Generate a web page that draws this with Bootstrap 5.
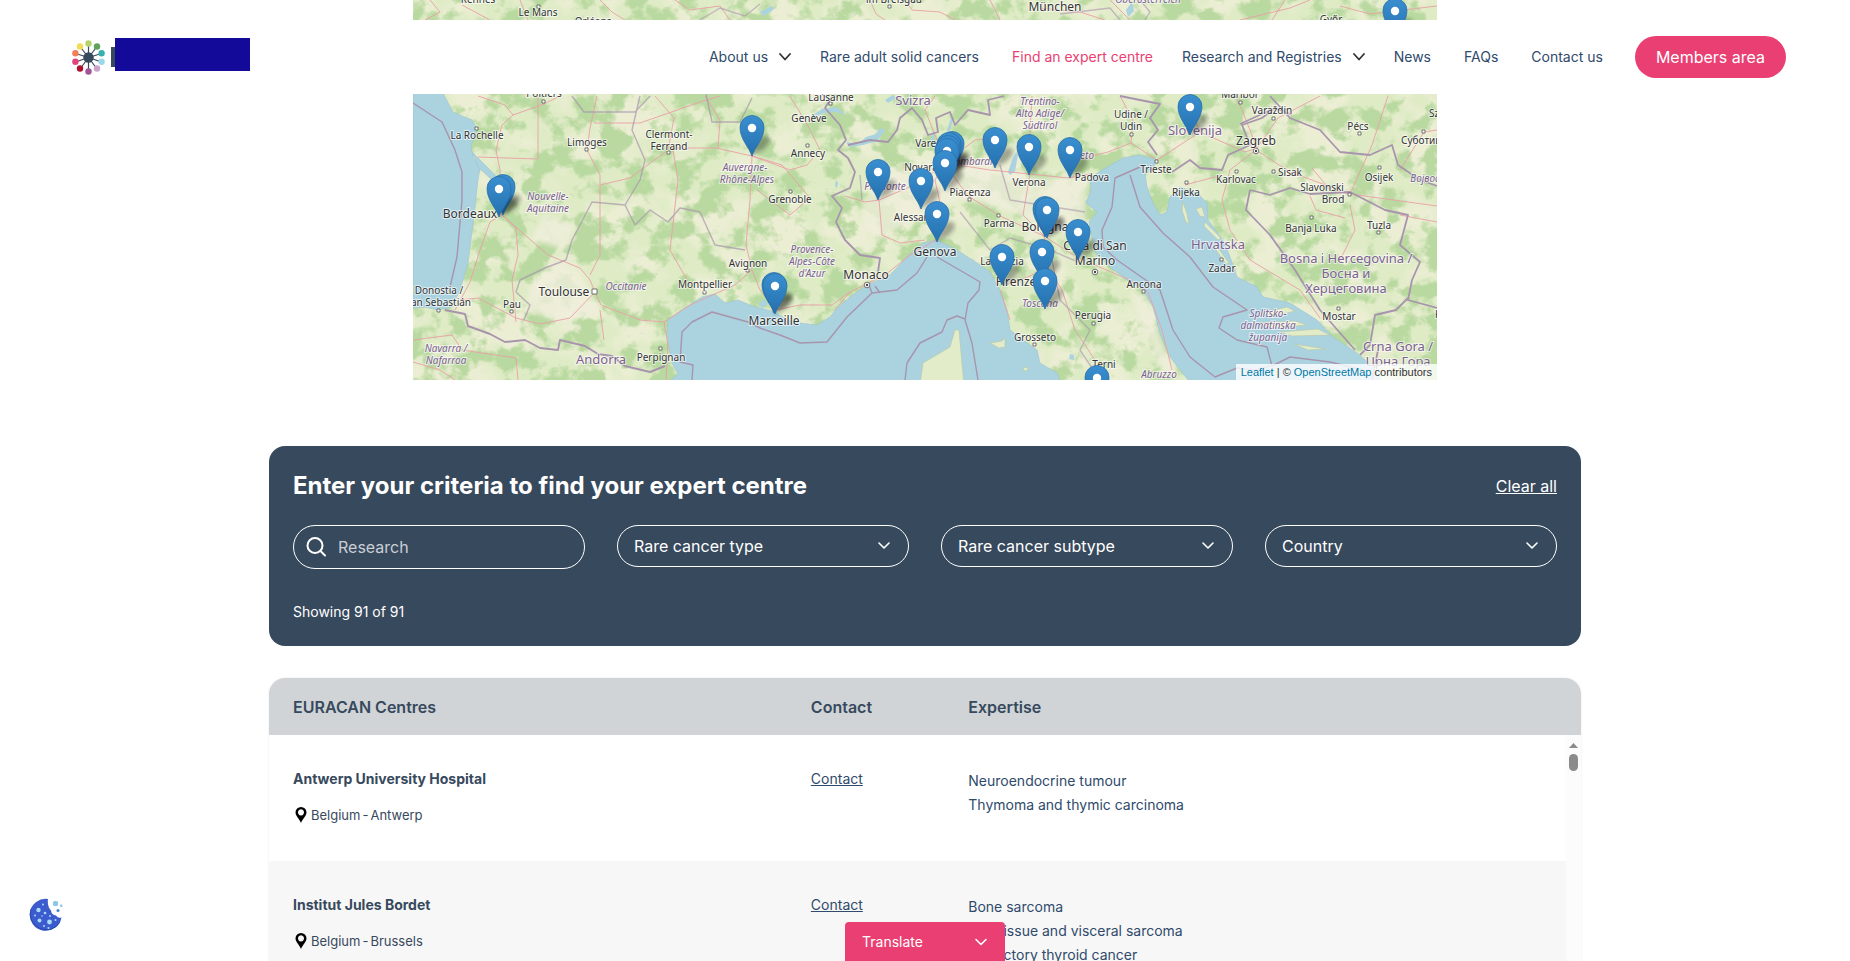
<!DOCTYPE html>
<html lang="en">
<head>
<meta charset="utf-8">
<meta name="viewport" content="width=device-width, initial-scale=1">
<title>Find an expert centre</title>
<link href="https://cdn.jsdelivr.net/npm/bootstrap@5.3.0/dist/css/bootstrap.min.css" rel="stylesheet">
<style>
  :root { --navy: #37495d; --ink: #2f4a6b; --pink: #e93f72; }
  body { font-family: Inter, "Liberation Sans", sans-serif; color: var(--navy); font-size: 14px; }
  a { color: var(--ink); }

  .site-header { top: 20px; min-height: 74px; padding: 0 64px 0 72px; }
  .site-nav { gap: 25px; font-size: 14px; }
  .site-nav .nav-link { color: var(--ink); padding: 0 4px; line-height: 24px; }
  .site-nav .menu-link { padding: 0; display: flex; align-items: center; gap: 11px; background: none; border: 0; }
  .site-nav .nav-link.active { color: var(--pink); }
  .btn-pink { background: var(--pink); color: #fff; font-size: 16px; line-height: 24px; padding: 9px 21px; border: 0; }
  .btn-pink:hover { background: #d12f60; color: #fff; }
  .brand-bar { width: 4px; height: 20px; background: var(--navy); margin-left: 6px; }
  .brand-name { width: 135px; height: 33px; background: #130a99; margin-bottom: 5px; }

  .map-wrap { max-width: 1024px; }
  .map-wrap svg { font-family: "Noto Sans", "Liberation Sans", sans-serif; }
  .map-credit { font: 11px/16px "Liberation Sans", sans-serif; color: #333; background: rgba(255,255,255,.8); padding: 0 5px; }
  .map-credit a { color: #0078a8; text-decoration: none; }

  .wide { max-width: 1312px; }
  .filter-card { background: var(--navy); border-radius: 16px; margin-top: 66px; padding: 24px 24px 22px; }
  .filter-title { font-size: 24px; line-height: 32px; font-weight: 700; }
  .filter-row { --bs-gutter-x: 32px; margin-top: 23px; }
  .pill, .pill:focus { background-color: transparent; color: #fff; border: 1px solid #fff; border-radius: 22px; font-size: 16px; line-height: 24px; padding: 8px 16px; }
  .pill option { color: #222; }
  select.pill { background-image: url("data:image/svg+xml,%3Csvg xmlns='http://www.w3.org/2000/svg' width='12' height='8' fill='none' stroke='white' stroke-width='1.6' stroke-linecap='round' stroke-linejoin='round'%3E%3Cpath d='M1 1l5 5 5-5'/%3E%3C/svg%3E"); background-size: 12px 8px; background-position: right 18px center; }
  input.pill { padding: 9px 16px 9px 44px; }
  input.pill::placeholder { color: #c9cfd5; opacity: 1; }
  .search-icon { left: 13px; top: 11px; }
  .count-line { line-height: 24px; margin-top: 31px; }

  .centres { margin-top: 32px; border-radius: 16px 16px 0 0; box-shadow: 0 0 2px #e4e4e4; overflow: hidden; }
  .centres table { table-layout: fixed; line-height: 24px; }
  .centres th { font-size: 16px; font-weight: 600; background: #d0d4d7; height: 57px; vertical-align: middle; padding: 0; }
  .centres td { height: 126px; vertical-align: top; padding: 32px 0; color: var(--ink); }
  .centres td:last-child { padding-top: 34px; }
  .centres th:first-child, .centres td:first-child { width: 41.3%; padding-left: 24px; }
  .centres th:nth-child(2) { width: 12%; }
  .centres tbody tr:nth-child(even) td { background: #f7f7f7; }
  .centre-name { font-size: 14px; line-height: 24px; font-weight: 700; color: var(--navy); margin: 0; }
  .centre-place { font-size: 13px; line-height: 20px; margin: 14px 0 0; gap: 2px; color: var(--navy); }
  .rail { top: 57px; right: 0; bottom: 0; width: 15px; background: #fcfcfc; }
  .rail span { width: 9px; height: 17px; border-radius: 5px; background: #8b8b8b; margin-top: 6px; }

  .translate { width: 160px; height: 39px; background: var(--pink); border-radius: 4px 4px 0 0; padding: 0 18px 0 17px; }
  .cookie { left: 29px; bottom: 29px; }
</style>
</head>
<body>

<header class="site-header fixed-top bg-white d-flex align-items-center justify-content-between">
  <a href="#" class="d-flex align-items-center text-decoration-none" aria-label="Home">
    <svg width="33" height="35" viewBox="0 0 33 35">
      <g stroke="#37495d" stroke-width="1.2">
        <path d="M16.500 17.500V4M16.500 17.500V31M16.500 17.500L8 6.500M16.500 17.500L25 6.500M16.500 17.500L3.500 13.500M16.500 17.500L29.500 13.500M16.500 17.500L3.500 22M16.500 17.500L29.500 22M16.500 17.500L8 29M16.500 17.500L25 29"/>
      </g>
      <circle cx="16.500" cy="17.500" r="5.200" fill="#37495d"/>
      <circle cx="16.500" cy="3.500" r="3.200" fill="#b5d26b"/><circle cx="25" cy="6.500" r="3.200" fill="#5fa35a"/>
      <circle cx="29.600" cy="13.300" r="3.200" fill="#38b0b0"/><circle cx="29.600" cy="21.800" r="3.200" fill="#9dd8ea"/>
      <circle cx="25" cy="28.500" r="3.200" fill="#c9a4cf"/><circle cx="16.500" cy="31.500" r="3.200" fill="#a0559b"/>
      <circle cx="8" cy="28.500" r="3.200" fill="#b01030"/><circle cx="3.400" cy="21.800" r="3.200" fill="#e0457a"/>
      <circle cx="3.400" cy="13.300" r="3.200" fill="#f0805a"/><circle cx="8" cy="6.500" r="3.200" fill="#f3dc55"/>
    </svg>
    <span class="brand-bar"></span><span class="brand-name"></span>
  </a>
  <nav class="d-flex align-items-center" aria-label="Main">
    <ul class="site-nav nav flex-nowrap align-items-center me-4 pe-1">
      <li><button class="nav-link menu-link" type="button">About us <svg width="12" height="8" fill="none" stroke="#333" stroke-width="1.800" stroke-linecap="round" stroke-linejoin="round"><path d="M1 1l5 5.500L11 1"/></svg></button></li>
      <li><a class="nav-link" href="#">Rare adult solid cancers</a></li>
      <li><a class="nav-link active" href="#">Find an expert centre</a></li>
      <li><button class="nav-link menu-link" type="button">Research and Registries <svg width="12" height="8" fill="none" stroke="#333" stroke-width="1.800" stroke-linecap="round" stroke-linejoin="round"><path d="M1 1l5 5.500L11 1"/></svg></button></li>
      <li><a class="nav-link" href="#">News</a></li>
      <li><a class="nav-link" href="#">FAQs</a></li>
      <li><a class="nav-link" href="#">Contact us</a></li>
    </ul>
    <a class="btn btn-pink rounded-pill" href="#">Members area</a>
  </nav>
</header>

<main>
  <div class="map-wrap mx-auto position-relative">
    <svg class="d-block w-100" viewBox="413 0 1024 380" role="img" aria-label="Map of expert centres">
      <defs>
        <filter id="woods" x="0" y="0" width="100%" height="100%" color-interpolation-filters="sRGB">
          <feTurbulence type="fractalNoise" baseFrequency="0.04 0.046" numOctaves="5" seed="8"/>
          <feColorMatrix values="0 0 0 0 .70  0 0 0 0 .84  0 0 0 0 .60  0 7 0 0 -3.300"/>
        </filter>
        <filter id="plains" x="0" y="0" width="100%" height="100%" color-interpolation-filters="sRGB">
          <feTurbulence type="fractalNoise" baseFrequency="0.02" numOctaves="4" seed="31"/>
          <feColorMatrix values="0 0 0 0 .95  0 0 0 0 .94  0 0 0 0 .86  0 5 0 0 -2.200"/>
        </filter>
        <filter id="soft"><feGaussianBlur stdDeviation="2"/></filter>
        <linearGradient id="pinFill" x1="0" y1="0" x2="0" y2="1"><stop offset="0" stop-color="#3a8fd0"/><stop offset="1" stop-color="#2470ae"/></linearGradient>
        <g id="pin">
          <path d="M-1 0L5-15Q11-23 17-19Q20-14 11-6Z" fill="#000" opacity=".3" filter="url(#soft)"/>
          <path d="M0 0C-3-9-12-17-12-28.500A12 12 0 0 1 12-28.500C12-17 3-9 0 0Z" fill="url(#pinFill)" stroke="#2b6fa8" stroke-width=".8"/>
          <circle cy="-28" r="4.200" fill="#fff"/>
        </g>
      </defs>
      <rect x="413" y="0" width="1024" height="380" fill="#deebc5"/>
      <rect x="413" y="0" width="1024" height="380" filter="url(#plains)" opacity=".7"/>
      <rect x="413" y="0" width="1024" height="380" filter="url(#woods)" opacity=".85"/>
      <!-- plains of the Po valley and the Garonne -->
      <g fill="#f1efdd" opacity=".75" filter="url(#soft)">
        <path d="M862 200L890 172L935 160L985 168L1040 178L1088 176L1085 215L1092 240L1050 228L1000 208L960 200L925 212L880 240L862 225Z"/>
        <path d="M530 285L560 265L590 290L600 312L560 322L525 310ZM545 215L575 225L565 250L530 240Z"/>
        <path d="M1130 292L1145 296L1165 350L1180 378L1162 370L1140 320Z"/>
      </g>
      <!-- sea -->
      <g fill="#aad3df" stroke="#9cc3d4" stroke-width=".6">
        <path d="M413 70L438 82L445 97L453 112L462 116L472 120L477 129L471 146L473 158L480 168L478 180L473 223L468 263L460 290L452 307L438 310L425 307L413 308Z"/>
        <path d="M472 152L494 174L504 190L501 194L490 178L478 167Z"/>
        <path d="M665 385L678 374L672 363L667 337L668 320L682 310L702 297L715 294L725 303L738 300L755 307L764 309L775 312L787 320L800 323L817 325L830 317L837 308L850 297L867 285L890 275L907 257L923 243L937 240L957 250L977 263L990 272L1000 290L1007 310L1010 330L1023 340L1037 350L1040 363L1057 373L1062 385Z"/>
        <path d="M1090 178L1107 167L1123 158L1140 155L1157 160L1153 168L1145 173L1147 187L1153 203L1160 215L1167 212L1170 197L1180 187L1197 193L1207 203L1208 220L1223 240L1230 257L1237 277L1257 287L1263 297L1290 303L1317 320L1333 337L1357 353L1373 367L1384 385L1192 385L1170 357L1160 333L1153 307L1143 290L1127 280L1110 267L1096 254L1092 238L1089 222L1097 212L1086 203L1091 190Z"/>
      </g>
      <!-- islands -->
      <g fill="#e3ecc8" stroke="#b7c6a4" stroke-width=".6">
        <path d="M920 385L923 363L940 353L950 347L955 330L959 330L961 353L964 385Z"/>
        <path d="M990 343l12-2 3-3v9l-6 1zM1023 368l4-1 1 3-4 1zM1183 202l4 12 2 10-3-2-4-12zM1196 209l6-2 3 10-5-1zM1205 222l16 16-3 2-14-14zM1263 313l24-6 8 4-20 5zM1258 323l37-2 12 4-35 3zM1280 332l38-3 12 6-38 1zM1294 344l32 5-18 1zM1215 244l14 19-3 1-12-17z"/>
      </g>
      <!-- lakes -->
      <g fill="#aad3df">
        <path d="M812 116l10-7 14-2 10 8-10-3-12 1-11 5zM846 142l12 2 8-7 10-3 4-6 5 2-8 11-14 4-14 2zM1008 172l4-12 4-8 2 3-3 16-5 4zM930 145l3-14 2 1-2 14zM947 131l4-13 2 1-3 12zM885 100l8-5 3 3-8 5zM758 304l6-5 4 5-6 4zM1070 354l4 1v5l-5-1zM836 180l2 3-1 5-2-2zM760 12l12-6 2 3-10 7zM1126 10l6-8 2 9-6 6z"/>
      </g>
      <!-- roads -->
      <g fill="none" stroke="#ea9fa6" stroke-width=".9">
        <path d="M502 215L500 170L496 150L502 125L513 115L505 105L478 96M513 115L544 104L560 96M538 159V96M537 159L478 157M502 215L516 228L518 255L512 280L516 322M502 215L548 255L580 268L590 280L595 292M502 215L490 222L480 250L470 282L455 310M595 292L601 305L640 320L664 322L690 305L708 297L735 285L752 270L746 245L750 200L752 156L748 130M597 96L590 128L587 150L600 175V255L590 275M600 185L630 178L668 150L674 118L655 96M673 150L678 180L670 250L690 285M673 148L716 148L752 156L790 170L807 165L820 150L808 126L790 96M595 292L570 318L540 324L516 318L478 298L460 300M600 310L604 340M664 322L668 345L666 380M413 340L452 335L462 350L516 358L518 380M413 362L440 370L455 380M705 96L720 120L718 148M594 123H640L700 102L720 96"/>
        <path d="M752 156L782 165L810 198L790 215L757 190M776 310L760 290L752 270M776 310L800 305L832 305L850 292L885 275L910 255L936 240L942 212L935 180L945 163L990 170L1030 174L1068 178L1090 174M879 200L882 235L900 243L925 240M879 200L921 182L945 163M879 200L865 202L845 196M944 163L968 196L1000 216L1044 236L1078 258L1130 280L1148 292L1162 330L1172 370M1030 174L1023 215L1044 236M1029 147L1032 96M1044 236L1048 268L1062 290L1075 330L1095 360M1000 268L1005 285L1030 276L1048 268M1000 290L1010 320M937 140L925 110L935 96M945 163L975 140L995 138M850 292L835 310"/>
        <path d="M1075 160L1108 152L1131 143L1133 120L1120 96M1131 143L1157 160L1180 145L1200 132L1245 152L1257 148L1242 110L1235 96M1256 150L1290 172L1350 194L1437 206M1256 150L1230 170L1222 200L1230 230L1250 260L1300 290L1320 318M1185 185L1222 175M1257 148L1278 118L1320 96M1350 194L1372 145L1388 96M1350 194L1330 190L1312 168M1200 132L1185 96M1310 196L1316 210L1345 218M1437 130L1424 132L1400 170M1350 205L1355 230L1340 260M1437 222L1400 215"/>
        <path d="M430 0L440 12L425 20M462 5L490 20M520 0L528 20M600 0L612 12L625 20M675 0L690 10L720 6L730 20M870 0L876 14L885 20M905 0L912 10L940 12L955 20M990 0L1000 20M1040 8L1080 12L1105 20M1110 0L1130 20M1240 20L1290 8L1310 0M1272 20L1285 0M1340 6L1370 14L1437 6"/>
      </g>
      <!-- national and regional borders -->
      <g fill="none" stroke="#a894ad" stroke-width="1.400" stroke-linejoin="round">
        <path stroke-width="1.900" d="M445 310L465 314L468 326L490 334L505 342L525 340L540 348L558 350L560 340L585 346L598 354L612 356L625 366L650 372L665 366"/>
        <path stroke-width="1.800" d="M878 272L880 258L860 255L845 240L836 222L842 208L832 196L850 188L855 172L848 158L838 150L846 140L840 125L825 108L830 100L822 94M848 145L870 140L888 142L897 130L900 118L912 108L922 120L928 135L938 132L936 118L950 112L955 125L968 110L990 115L988 100L1004 96"/>
        <path stroke-width="1.800" d="M1120 96L1160 104L1150 118L1158 130L1148 142L1157 155M1172 172L1190 160L1200 168L1222 170L1228 155L1250 145L1242 125L1262 118L1275 108M1270 96L1290 118L1320 130L1340 152L1370 155L1392 145L1398 165L1420 180L1437 186M1292 115L1275 108L1240 124"/>
        <path stroke-width="1.800" d="M1250 190L1246 210L1270 235L1295 270L1320 310L1355 350M1250 190L1270 195L1290 188L1310 194L1350 192L1385 210L1408 215L1400 245L1420 262L1412 280L1408 300L1437 308M1408 298L1396 310L1375 315L1370 345L1360 355M1372 380L1378 350"/>
        <path d="M413 103L442 122L455 150L462 172V200L457 257L450 287M692 380L693 365L680 362L682 332L692 322L712 312L748 322L760 328L780 335L800 343L827 342L847 317L872 293L897 290L917 273L927 257M872 293L869 285M880 293L875 286M937 257L963 272L980 282L979 290L968 303L965 320L972 343L978 380M905 380L907 363L920 343L942 332L947 320L957 316L965 319"/>
        <path d="M1140 167L1115 178L1112 207L1102 230L1103 247L1117 260L1160 290L1173 330L1190 357L1215 377L1237 368L1255 370L1270 366M1130 175L1140 207L1163 233L1190 257L1213 287L1247 310L1223 317L1219 328L1237 340L1267 347L1272 366L1290 357L1330 362L1363 370"/>
        <path opacity=".7" d="M516 292L520 280L545 268L566 260L572 240L580 225L592 202L625 205L635 225L650 210L668 222L680 208L700 212L715 245L745 250M572 96L584 112L635 112L650 96M706 94L712 122L740 122L752 98M625 205L640 180L645 160L632 130L640 96M516 292L530 305L524 320"/>
        <path opacity=".6" d="M860 175L862 200M960 212L990 250L1010 238L1050 250L1078 262M1050 250L1060 300L1090 330L1080 350L1100 380M1000 165L1010 200L1085 212M700 20L720 8L745 16L760 4M1140 0L1150 12L1145 20M1120 20L1110 8L1060 14"/>
      </g>
      <!-- towns -->
      <g fill="#fff" stroke="#555" stroke-width=".8">
        <path d="M475 127h3v3h-3zM585 148h3v3h-3zM667 151h3v3h-3zM542 100h3v3h-3zM510 310h3v3h-3zM659 347h3v3h-3zM703 291h3v3h-3zM746 269h3v3h-3zM437 309h3v3h-3zM806 144h3v3h-3zM789 190h3v3h-3zM829 102h3v3h-3zM968 198h3v3h-3zM997 214h3v3h-3zM1033 343h3v3h-3zM1092 322h3v3h-3zM1142 290h3v3h-3zM1130 133h3v3h-3zM1155 160h3v3h-3zM1185 181h3v3h-3zM1235 170h3v3h-3zM1272 170h3v3h-3zM1272 117h3v3h-3zM1358 132h3v3h-3zM1378 166h3v3h-3zM1310 216h3v3h-3zM1377 231h3v3h-3zM1220 258h3v3h-3zM1337 307h3v3h-3zM1422 130h3v3h-3zM1348 193h3v3h-3zM537 5h3v3h-3zM888 5h3v3h-3zM1239 101h3v3h-3zM592 289h5v5h-5z"/>
        <circle cx="867" cy="285" r="2.800"/><circle cx="1095" cy="272" r="2.800"/><circle cx="1256" cy="151" r="2.800"/>
      </g>
      <g fill="#444"><circle cx="867" cy="285" r="1.200"/><circle cx="1095" cy="272" r="1.200"/><circle cx="1256" cy="151" r="1.200"/></g>
      <!-- place names -->
      <g fill="#333" font-size="10" text-anchor="middle" stroke="#fff" stroke-opacity=".65" stroke-width="2" paint-order="stroke" stroke-linejoin="round">
        <text x="478" y="3">Rennes</text><text x="538" y="16">Le Mans</text><text x="593" y="25">Orléans</text><text x="894" y="3">im Breisgau</text><text x="1331" y="23">Győr</text>
        <text x="544" y="97">Poitiers</text><text x="477" y="139">La Rochelle</text><text x="587" y="146">Limoges</text>
        <text x="669" y="138">Clermont-<tspan x="669" dy="12">Ferrand</tspan></text>
        <text x="439" y="294">Donostia /</text><text x="441" y="306">an Sebastián</text><text x="512" y="308">Pau</text><text x="705" y="288">Montpellier</text><text x="748" y="267">Avignon</text><text x="661" y="361">Perpignan</text>
        <text x="831" y="101">Lausanne</text><text x="809" y="122">Genève</text><text x="808" y="157">Annecy</text><text x="790" y="203">Grenoble</text><text x="931" y="147">Varese</text><text x="921" y="171">Novara</text><text x="970" y="196">Piacenza</text><text x="921" y="221">Alessandria</text><text x="999" y="227">Parma</text><text x="1029" y="186">Verona</text><text x="1092" y="181">Padova</text><text x="1002" y="265">La Spezia</text><text x="1093" y="319">Perugia</text><text x="1035" y="341">Grosseto</text><text x="1104" y="368">Terni</text>
        <text x="1240" y="98">Maribor</text><text x="1131" y="118">Udine /<tspan x="1131" dy="12">Udin</tspan></text><text x="1272" y="114">Varaždin</text><text x="1358" y="130">Pécs</text><text x="1434" y="117">Sz</text><text x="1424" y="144">Суботица</text><text x="1156" y="173">Trieste</text><text x="1186" y="196">Rijeka</text><text x="1236" y="183">Karlovac</text><text x="1290" y="176">Sisak</text><text x="1379" y="181">Osijek</text><text x="1322" y="191">Slavonski<tspan x="1333" dy="12">Brod</tspan></text><text x="1311" y="232">Banja Luka</text><text x="1379" y="229">Tuzla</text><text x="1222" y="272">Zadar</text><text x="1144" y="288">Ancona</text><text x="1339" y="320">Mostar</text><text x="1438" y="318">K</text>
        <g font-size="12"><text x="1055" y="11">München</text><text x="470" y="218">Bordeaux</text><text x="564" y="296">Toulouse</text><text x="774" y="325">Marseille</text><text x="866" y="279">Monaco</text><text x="935" y="256">Genova</text><text x="1045" y="231">Bologna</text><text x="1095" y="250">Città di San<tspan x="1095" dy="15">Marino</tspan></text><text x="1016" y="286">Firenze</text><text x="1256" y="145">Zagreb</text></g>
      </g>
      <g fill="#7d6190" font-size="10" font-style="italic" text-anchor="middle" stroke="#fff" stroke-opacity=".6" stroke-width="2" paint-order="stroke">
        <text x="548" y="200">Nouvelle-<tspan x="548" dy="12">Aquitaine</tspan></text><text x="745" y="171">Auvergne-<tspan x="747" dy="12">Rhône-Alpes</tspan></text><text x="626" y="290">Occitanie</text><text x="446" y="352">Navarra /<tspan x="446" dy="12">Nafarroa</tspan></text>
        <text x="812" y="253">Provence-<tspan x="812" dy="12">Alpes-Côte</tspan><tspan x="812" dy="12">d'Azur</tspan></text><text x="885" y="190">Piemonte</text><text x="974" y="165">Lombardia</text><text x="1040" y="105">Trentino-<tspan x="1040" dy="12">Alto Adige/</tspan><tspan x="1040" dy="12">Südtirol</tspan></text><text x="1079" y="159">Veneto</text><text x="1040" y="307">Toscana</text><text x="1159" y="378">Abruzzo</text><text x="1268" y="317">Splitsko-<tspan x="1268" dy="12">dalmatinska</tspan><tspan x="1268" dy="12">županija</tspan></text><text x="1434" y="182">Војводина</text><text x="1148" y="3">Oberösterreich</text>
      </g>
      <g fill="#7d6190" font-size="13" text-anchor="middle" stroke="#fff" stroke-opacity=".6" stroke-width="2" paint-order="stroke">
        <text x="913" y="105">Svizra</text><text x="601" y="364">Andorra</text><text x="1195" y="135">Slovenija</text><text x="1218" y="249">Hrvatska</text><text x="1346" y="263">Bosna i Hercegovina /<tspan x="1346" dy="15">Босна и</tspan><tspan x="1346" dy="15">Херцеговина</tspan></text><text x="1398" y="351">Crna Gora /<tspan x="1398" dy="15">Црна Гора</tspan></text>
      </g>
      <!-- pins: each one's tip is its place on the map -->
      <use href="#pin" x="1395" y="39"/><use href="#pin" x="1190" y="135"/><use href="#pin" x="752" y="156"/>
      <use href="#pin" x="995" y="168"/><use href="#pin" x="952" y="172"/><use href="#pin" x="949" y="173"/><use href="#pin" x="948" y="176"/><use href="#pin" x="947" y="179"/>
      <use href="#pin" x="1029" y="175"/><use href="#pin" x="1070" y="178"/><use href="#pin" x="945" y="191"/><use href="#pin" x="878" y="200"/>
      <use href="#pin" x="921" y="209"/><use href="#pin" x="503" y="215"/><use href="#pin" x="499" y="217"/><use href="#pin" x="1045" y="237"/><use href="#pin" x="1047" y="238"/>
      <use href="#pin" x="937" y="242"/><use href="#pin" x="1078" y="260"/><use href="#pin" x="1042" y="280"/><use href="#pin" x="1002" y="285"/>
      <use href="#pin" x="1045" y="309"/><use href="#pin" x="774" y="313"/><use href="#pin" x="775" y="314"/><use href="#pin" x="1097" y="406"/>
    </svg>
    <div class="map-credit position-absolute bottom-0 end-0"><a href="#">Leaflet</a> | © <a href="#">OpenStreetMap</a> contributors</div>
  </div>

  <section class="filter-card wide mx-auto text-white">
    <div class="d-flex align-items-center justify-content-between">
      <h2 class="filter-title m-0">Enter your criteria to find your expert centre</h2>
      <a href="#" class="text-white fs-6">Clear all</a>
    </div>
    <form class="row filter-row">
      <div class="col-3">
        <div class="position-relative">
          <svg class="search-icon position-absolute" width="20" height="21" fill="none" stroke="#fff" stroke-width="2" stroke-linecap="round"><circle cx="9" cy="9.500" r="7.500"/><path d="M14.500 15l4.500 4.500"/></svg>
          <input class="form-control pill" type="text" placeholder="Research" aria-label="Research">
        </div>
      </div>
      <div class="col-3"><select class="form-select pill" aria-label="Rare cancer type"><option>Rare cancer type</option></select></div>
      <div class="col-3"><select class="form-select pill" aria-label="Rare cancer subtype"><option>Rare cancer subtype</option></select></div>
      <div class="col-3"><select class="form-select pill" aria-label="Country"><option>Country</option></select></div>
    </form>
    <p class="count-line mb-0">Showing 91 of 91</p>
  </section>

  <section class="centres wide mx-auto position-relative">
    <table class="w-100">
      <thead><tr><th>EURACAN Centres</th><th>Contact</th><th>Expertise</th></tr></thead>
      <tbody>
        <tr>
          <td><h3 class="centre-name">Antwerp University Hospital</h3>
            <p class="centre-place d-flex align-items-center"><svg width="16" height="16" viewBox="0 0 16 16"><path fill="#000" fill-rule="evenodd" d="M8 0a5.500 5.500 0 0 1 5.500 5.500C13.500 9 9.500 12 8 16C6.500 12 2.500 9 2.500 5.500A5.500 5.500 0 0 1 8 0zM8 2.200a3 3.200 0 1 0 .01 0z"/></svg><span>Belgium</span><span>-</span><span>Antwerp</span></p></td>
          <td><a href="#">Contact</a></td>
          <td>Neuroendocrine tumour<br>Thymoma and thymic carcinoma</td>
        </tr>
        <tr>
          <td><h3 class="centre-name">Institut Jules Bordet</h3>
            <p class="centre-place d-flex align-items-center"><svg width="16" height="16" viewBox="0 0 16 16"><path fill="#000" fill-rule="evenodd" d="M8 0a5.500 5.500 0 0 1 5.500 5.500C13.500 9 9.500 12 8 16C6.500 12 2.500 9 2.500 5.500A5.500 5.500 0 0 1 8 0zM8 2.200a3 3.200 0 1 0 .01 0z"/></svg><span>Belgium</span><span>-</span><span>Brussels</span></p></td>
          <td><a href="#">Contact</a></td>
          <td>Bone sarcoma<br>Soft tissue and visceral sarcoma<br>Refractory thyroid cancer</td>
        </tr>
      </tbody>
    </table>
    <div class="rail position-absolute d-flex flex-column align-items-center pt-1">
      <svg class="mt-1 flex-shrink-0" width="9" height="5"><path fill="#8b8b8b" d="M4.500 0L9 5H0z"/></svg>
      <span></span>
    </div>
  </section>
</main>

<button type="button" class="translate fixed-bottom mx-auto border-0 text-white d-flex align-items-center justify-content-between">Translate
  <svg width="12" height="8" fill="none" stroke="#fff" stroke-width="1.600" stroke-linecap="round" stroke-linejoin="round"><path d="M1 1.500l5 5 5-5"/></svg>
</button>

<button type="button" class="cookie position-fixed border-0 bg-transparent p-0" aria-label="Cookie settings">
  <svg class="d-block" width="34" height="34" viewBox="0 0 34 34">
    <path fill="#3b5bcf" d="M19 1A16 16 0 1 0 32.500 19.500Q29 20.500 27 17.500Q22.500 17 22 12.500Q18 8 19 1Z"/>
    <path fill="none" stroke="#2c48ad" d="M2 11A16 16 0 0 0 31 24"/>
    <g fill="#a9dcf8"><circle cx="9.500" cy="12" r="2.200"/><circle cx="10.500" cy="22.500" r="2"/><circle cx="20.500" cy="24" r="2.400"/><circle cx="16" cy="15" r="1.300"/><circle cx="14" cy="6.500" r="1"/><circle cx="19.500" cy="30" r="1.100"/><circle cx="6" cy="17.500" r="1"/><circle cx="21" cy="18" r="1"/><circle cx="26.500" cy="22" r="1"/><circle cx="15" cy="28" r="1"/><circle cx="13" cy="18" r=".8"/></g>
    <g fill="#8cc6ee"><rect x="24" y="3" width="5" height="5" rx="1.500"/><rect x="31" y="6.500" width="2.500" height="2.500" rx="1"/></g><circle cx="29" cy="12.500" r="1.500" fill="#3f86d8"/>
  </svg>
</button>

<script src="https://cdn.jsdelivr.net/npm/bootstrap@5.3.0/dist/js/bootstrap.bundle.min.js"></script>
</body>
</html>
